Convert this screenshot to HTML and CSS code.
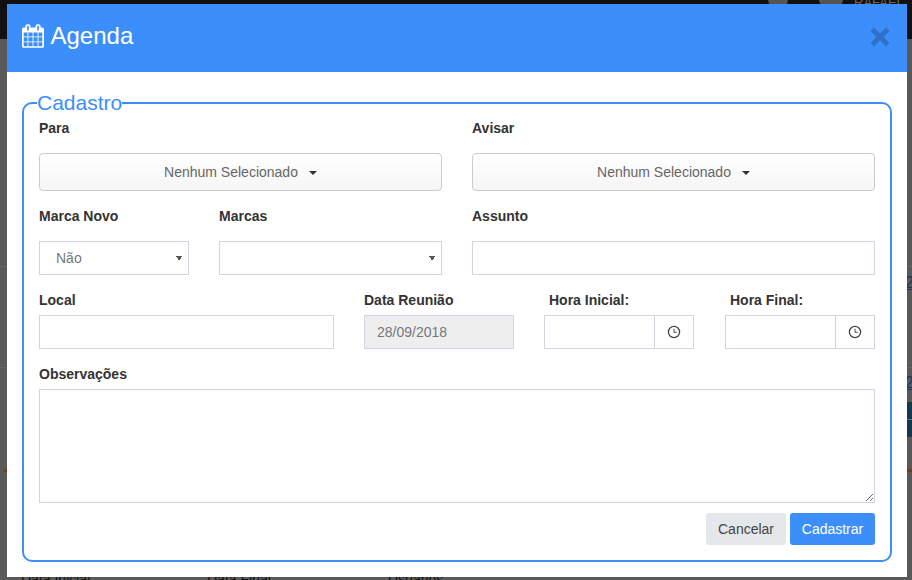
FILE: index.html
```html
<!doctype html>
<html lang="pt-BR">
 <head>
  <meta charset="UTF-8">
  <title>Agenda</title>
  <link rel="stylesheet" href="styles.css">
 </head>
 <body>
  <!-- pagina atras do modal -->
  <div class="backdrop">
	<div class="bd_top"></div>
	<span class="bd_avatar bd_a1"></span>
	<span class="bd_avatar bd_a2"></span>
	<span class="bd_user">RAFAEL</span>
	<div class="bd_rule bd_r1"></div>
	<div class="bd_rule bd_r2"></div>
	<span class="bd_num bd_n1">2</span>
	<span class="bd_num bd_n2">2</span>
	<div class="bd_teal"></div>
	<div class="bd_line"></div>
	<span class="bd_col bd_c1">Data Inicial</span>
	<span class="bd_col bd_c2">Data Final</span>
	<span class="bd_col bd_c3">Usuários</span>
  </div>

  <div class="modal">
	<div class="modal_header">
		<h4 class="modal_title">
			<svg class="ico_cal" viewBox="0 0 1664 1792"><path fill="#fff" d="M128 1664h288v-288h-288v288zm352 0h320v-288h-320v288zm-352-352h288v-320h-288v320zm352 0h320v-320h-320v320zm-352-384h288v-288h-288v288zm736 736h320v-288h-320v288zm-384-736h320v-288h-320v288zm768 736h288v-288h-288v288zm-384-352h320v-320h-320v320zm-352-864v-288q0-13-9.5-22.5t-22.5-9.5h-64q-13 0-22.5 9.5t-9.5 22.5v288q0 13 9.5 22.5t22.5 9.5h64q13 0 22.5-9.5t9.5-22.5zm736 864h288v-320h-288v320zm-384-384h320v-288h-320v288zm384 0h288v-288h-288v288zm32-480v-288q0-13-9.5-22.5t-22.5-9.5h-64q-13 0-22.5 9.5t-9.5 22.5v288q0 13 9.5 22.5t22.5 9.5h64q13 0 22.5-9.5t9.5-22.5zm384-64v1280q0 52-38 90t-90 38h-1408q-52 0-90-38t-38-90v-1280q0-52 38-90t90-38h128v-96q0-66 47-113t113-47h64q66 0 113 47t47 113v96h384v-96q0-66 47-113t113-47h64q66 0 113 47t47 113v96h128q52 0 90 38t38 90z"/></svg>
			Agenda
		</h4>
		<button class="close" type="button" aria-label="Fechar">
			<svg viewBox="0 0 20 20" width="20" height="20"><path fill="#2f72c8" d="M4 0.5L10 6.5L16 0.5L19.5 4L13.5 10L19.5 16L16 19.5L10 13.5L4 19.5L0.5 16L6.5 10L0.5 4Z"/></svg>
		</button>
	</div>
	<div class="modal_body">
		<fieldset class="box">
			<legend>Cadastro</legend>
			<div class="row">
				<div class="col_half">
					<label class="lbl lbl_far">Para</label>
					<button class="ms_btn" type="button">Nenhum Selecionado<b class="caret"></b></button>
				</div>
				<div class="col_half">
					<label class="lbl lbl_far">Avisar</label>
					<button class="ms_btn" type="button">Nenhum Selecionado<b class="caret"></b></button>
				</div>
			</div>
			<div class="row mt">
				<div class="col_half row">
					<div class="col_novo">
						<label class="lbl lbl_far">Marca Novo</label>
						<select class="ctl sel"><option>Não</option></select>
					</div>
					<div class="col_marcas">
						<label class="lbl lbl_far">Marcas</label>
						<select class="ctl sel"><option></option></select>
					</div>
				</div>
				<div class="col_half">
					<label class="lbl lbl_far">Assunto</label>
					<input class="ctl" type="text">
				</div>
			</div>
			<div class="row mt">
				<div class="col_local">
					<label class="lbl">Local</label>
					<input class="ctl" type="text">
				</div>
				<div class="col_small">
					<label class="lbl">Data Reunião</label>
					<input class="ctl" type="text" value="28/09/2018" disabled>
				</div>
				<div class="col_small">
					<label class="lbl lbl_in">Hora Inicial:</label>
					<div class="time">
						<input class="ctl" type="text">
						<span class="addon"><svg viewBox="0 0 14 14" width="14" height="14"><circle cx="7" cy="7" r="5.6" fill="none" stroke="#444" stroke-width="1.3"/><path d="M7 3.8V7.3H9.6" fill="none" stroke="#444"/></svg></span>
					</div>
				</div>
				<div class="col_small col_last">
					<label class="lbl lbl_in">Hora Final:</label>
					<div class="time">
						<input class="ctl" type="text">
						<span class="addon"><svg viewBox="0 0 14 14" width="14" height="14"><circle cx="7" cy="7" r="5.6" fill="none" stroke="#444" stroke-width="1.3"/><path d="M7 3.8V7.3H9.6" fill="none" stroke="#444"/></svg></span>
					</div>
				</div>
			</div>
			<div class="mt">
				<label class="lbl">Observações</label>
				<textarea class="ctl area"></textarea>
			</div>
			<div class="actions">
				<button class="btn btn_cancel" type="button">Cancelar</button>
				<button class="btn btn_save" type="button">Cadastrar</button>
			</div>
		</fieldset>
	</div>
  </div>
 </body>
</html>
```

FILE: styles.css
```css
*{box-sizing:border-box;}
html,body{margin:0;padding:0;height:100%;overflow:hidden;}
body{background:#595959;padding:4px 0 0 7px;font-family:"Liberation Sans",Arial,sans-serif;font-size:14px;color:#333;}

/* fundo escurecido */
.backdrop{position:absolute;top:0;left:0;width:912px;height:580px;overflow:hidden;}
.bd_top{height:39px;background:#111;}
.bd_avatar{position:absolute;top:-8px;width:20px;height:16px;border-radius:50%;background:#555;}
.bd_a1{left:768px;}
.bd_a2{left:819px;width:24px;}
.bd_user{position:absolute;top:-5px;left:854px;font-size:13px;color:#666;}
.bd_rule{position:absolute;left:0;width:912px;height:1px;background:#666;}
.bd_r1{top:266px;}
.bd_r2{top:367px;}
.bd_num{position:absolute;left:905px;font-size:16px;color:#1a3a5c;line-height:18px;text-decoration:underline;}
.bd_n1{top:274px;}
.bd_n2{top:374px;}
.bd_teal{position:absolute;top:402px;right:0;width:6px;height:35px;background:#14394d;border-top:17px solid #14394d;box-shadow:inset 0 1px 0 #5a7280;}
.bd_line{position:absolute;top:469px;left:4px;width:908px;height:3px;background:#6b4212;}
.bd_col{position:absolute;top:571px;font-size:14px;color:#111;}
.bd_c1{left:21px;}
.bd_c2{left:207px;}
.bd_c3{left:388px;}

.modal{position:relative;width:900px;height:573px;background:#fff;}
.modal_header{height:68px;background:#3c8ffa;padding:0 17px 4px 15px;display:flex;align-items:center;justify-content:space-between;}
.modal_title{margin:0;font-size:24px;font-weight:normal;color:#fff;display:flex;align-items:center;gap:6.5px;}
.ico_cal{width:22px;height:24px;display:block;}
.close{border:0;background:none;padding:0;display:block;margin-top:2px;}
.close svg{display:block;}

.modal_body{padding:19px 15px 15px;}
.box{margin:0;padding:3px 15px 15px;border:2px solid #3c8ffa;border-radius:10px;min-width:0;}
.box legend{margin-left:-2px;padding:0;font-size:21px;line-height:24px;color:#3c8ffa;}

.row{display:flex;gap:30px;}
.mt{margin-top:15px;}
.col_half{width:403px;}
.col_novo{width:150px;}
.col_marcas{width:223px;}
.col_local{width:295px;}
.col_small{width:150px;}
.col_last{margin-left:1px;}

.lbl{display:block;height:20px;line-height:21px;margin-bottom:5px;font-size:14px;font-weight:bold;color:#333;}
.lbl_far{margin-bottom:15px;}
.lbl_in{padding-left:5px;}

.ms_btn{display:block;width:100%;height:38px;border:1px solid #ccc;border-radius:4px;background:linear-gradient(#fff,#f5f5f5);font-family:inherit;font-size:14px;color:#666;text-align:center;}
.caret{display:inline-block;margin-left:11px;vertical-align:middle;border-top:4px solid #333;border-left:4px solid transparent;border-right:4px solid transparent;}

.ctl{display:block;width:100%;height:34px;padding:6px 12px;border:1px solid #d1d5e0;border-radius:0;background:#fff;font-family:inherit;font-size:14px;color:#777;outline:0;}
.ctl:disabled{background:#eee;color:#777;}
.sel{appearance:none;padding-left:16px;background-color:#fff;background-image:linear-gradient(to top right,transparent 50%,#555 50%),linear-gradient(to top left,transparent 50%,#555 50%);background-size:3px 5px,3px 5px;background-position:right 9px center,right 6px center;background-repeat:no-repeat;}
.area{height:114px;resize:vertical;}

.time{display:flex;}
.time .ctl{flex:1;min-width:0;}
.addon{width:40px;height:34px;margin-left:-1px;border:1px solid #d1d5e0;display:flex;align-items:center;justify-content:center;}

.actions{display:flex;justify-content:flex-end;gap:4px;margin-top:10px;}
.btn{height:32px;border:0;border-radius:3px;font-family:inherit;font-size:14px;padding:0;}
.btn_cancel{width:80px;background:#e4e8eb;color:#444;}
.btn_save{width:85px;background:#3c8ffa;color:#fff;}
```
